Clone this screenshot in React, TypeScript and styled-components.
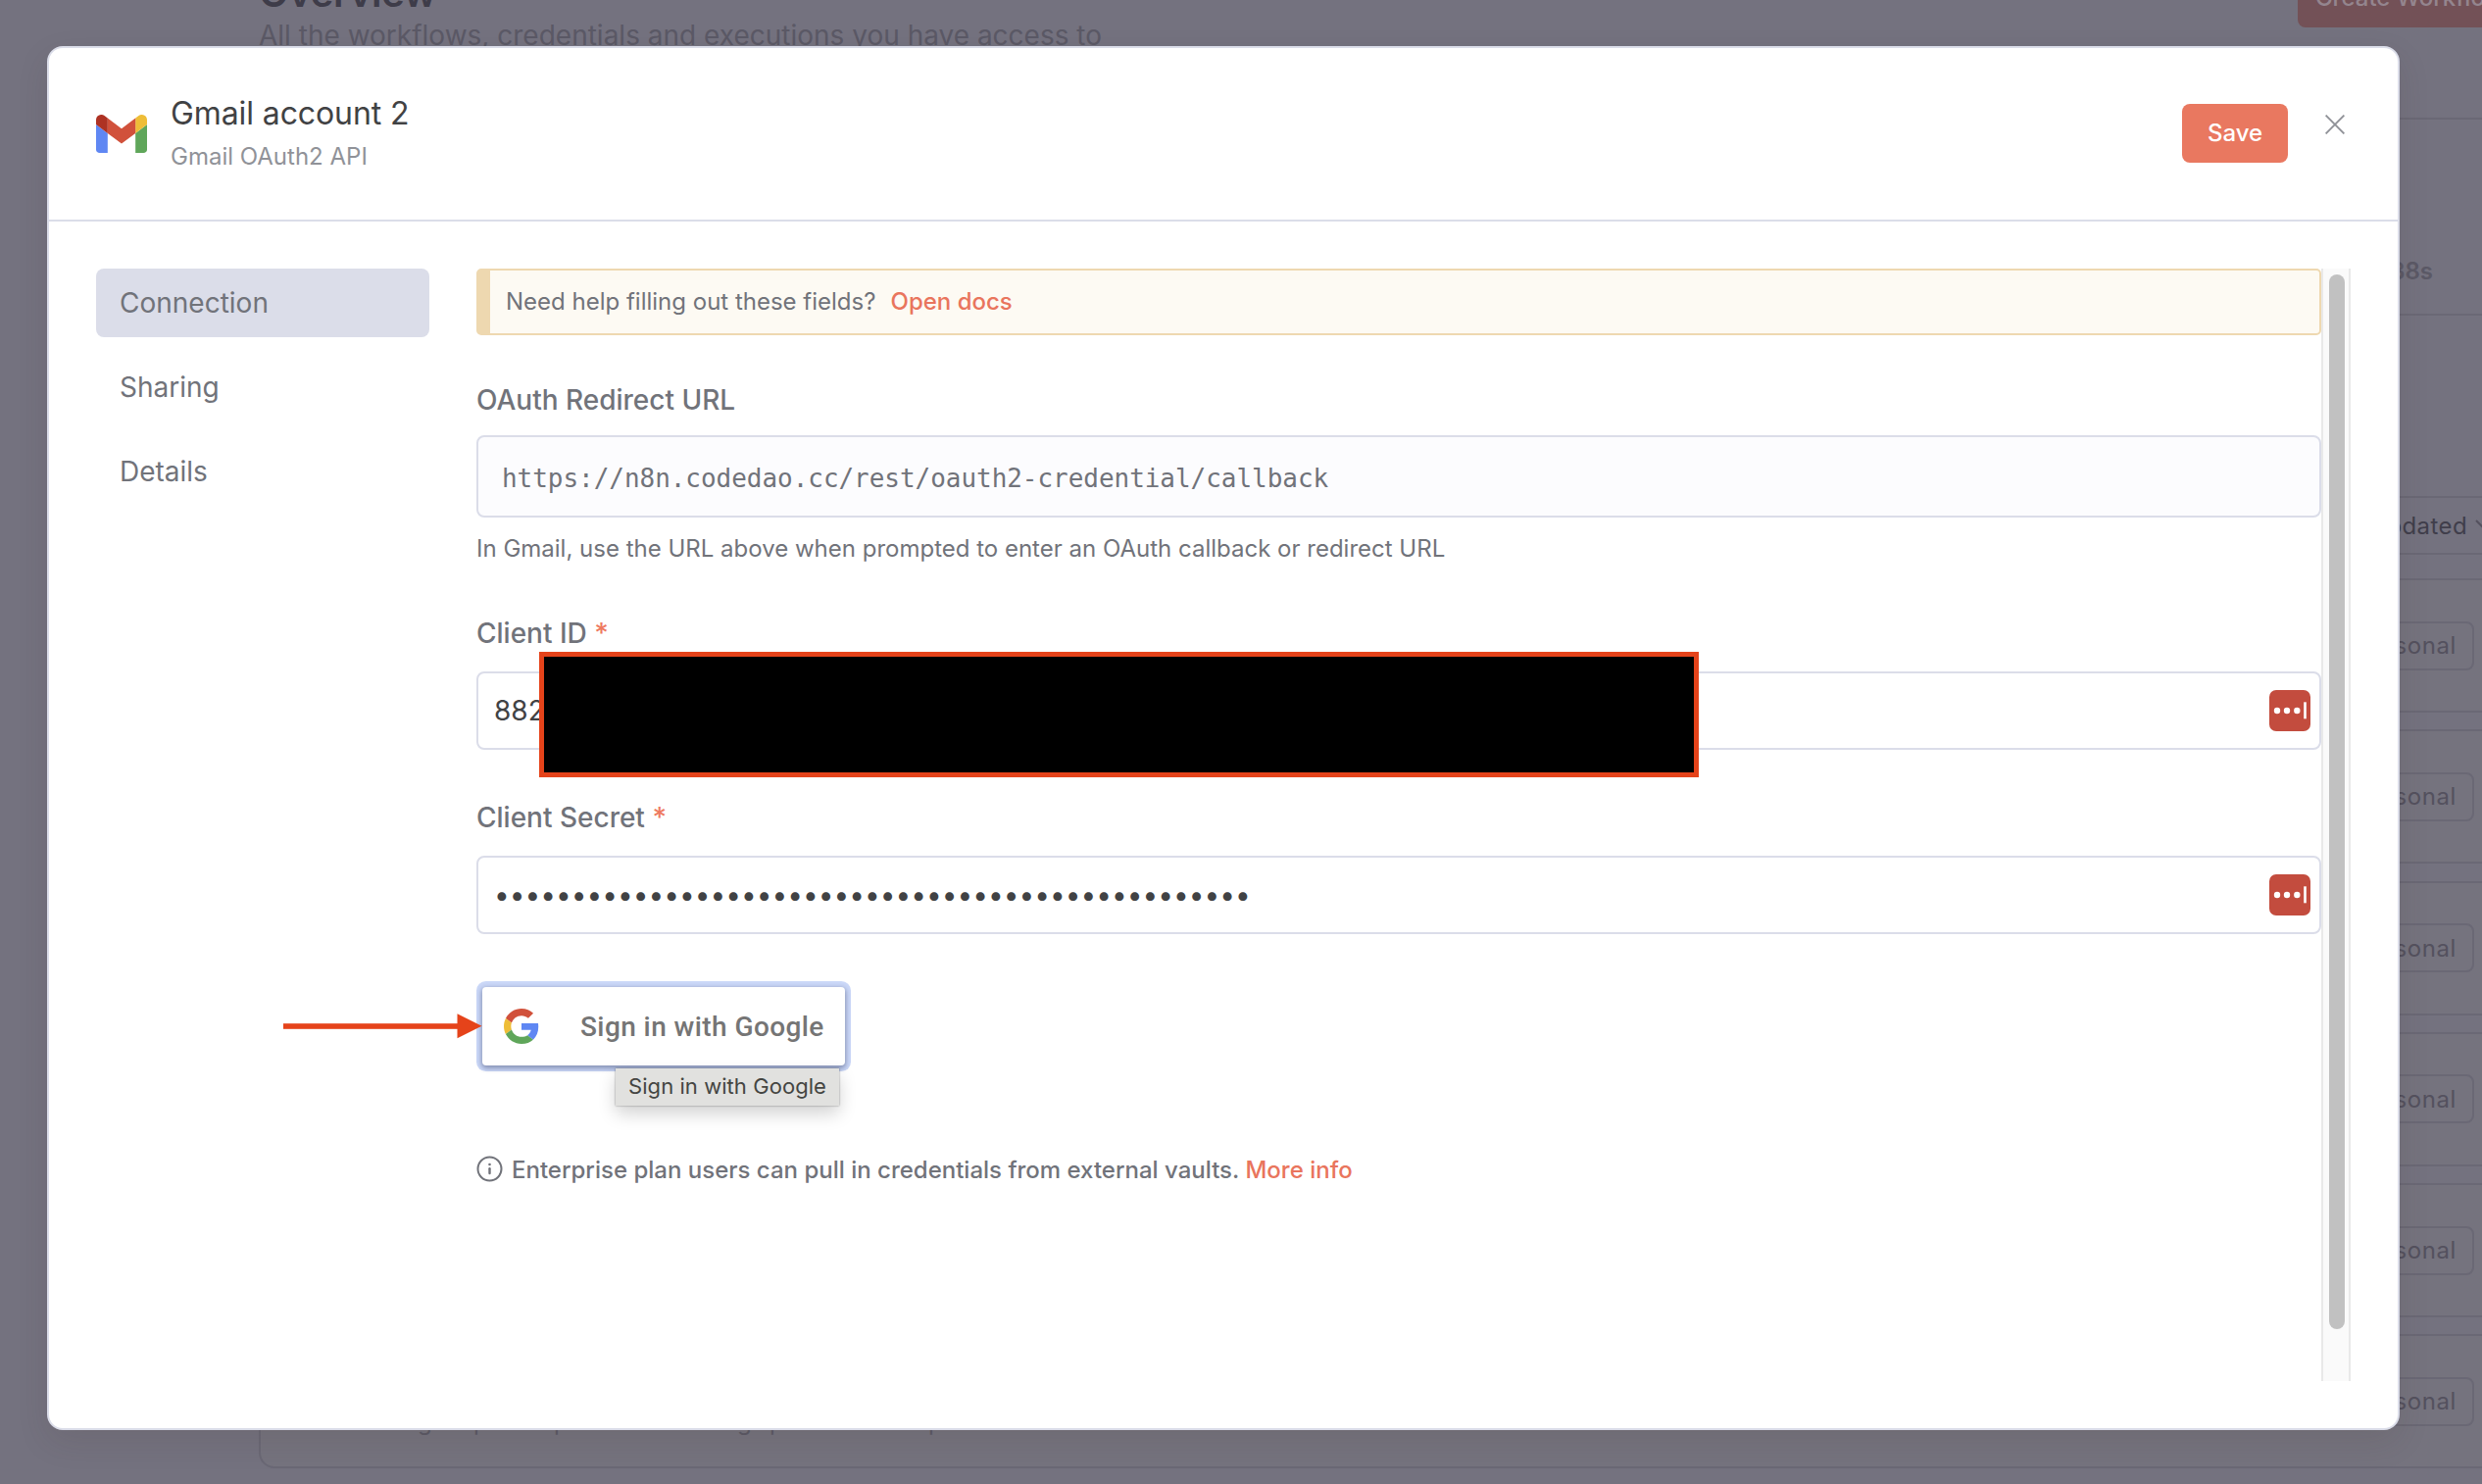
import React from 'react';
import styled, { createGlobalStyle } from 'styled-components';

const GlobalStyle = createGlobalStyle`
  * { box-sizing: border-box; }
  body {
    margin: 0;
    font-family: Inter, "Liberation Sans", sans-serif;
    color: #71737a;
    background: #74727f;
  }
  button { font-family: inherit; cursor: pointer; }
`;

/* ---------- dimmed page behind the dialog ---------- */

const Screen = styled.div`
  position: relative;
  width: 2532px;
  height: 1514px;
  overflow: hidden;
  background: #74727f;
`;

const Backdrop = styled.div`
  display: flex;
  flex-direction: column;
  width: 2600px;
  padding-left: 264px;
`;

const PageHeader = styled.div`
  display: flex;
  justify-content: space-between;
  height: 120px;
`;

const PageTitle = styled.h1`
  margin: -24px 0 0;
  font-size: 40px;
  line-height: 34px;
  font-weight: 600;
  letter-spacing: -0.4px;
  color: #3e3c49;
`;

const PageSubtitle = styled.p`
  margin: 6px 0 0;
  font-size: 28px;
  line-height: 40px;
  color: #5b5966;
  white-space: nowrap;
`;

const CreateButton = styled.div`
  width: 256px;
  height: 60px;
  margin-top: -32px;
  padding-left: 18px;
  border-radius: 8px;
  font-size: 24px;
  line-height: 59px;
  font-weight: 500;
  color: #94858e;
  background: #735157;
`;

const Stats = styled.div`
  display: flex;
  justify-content: flex-end;
  align-items: flex-end;
  height: 202px;
  padding: 0 116px 25px 0;
  border: 2px solid #6a6875;
  border-radius: 12px;
  font-size: 24px;
  line-height: 36px;
  font-weight: 600;
  color: #5b5966;
`;

const Toolbar = styled.div`
  display: flex;
  justify-content: flex-end;
  margin-top: 184px;
`;

const SortSelect = styled.div`
  display: flex;
  align-items: center;
  justify-content: flex-end;
  gap: 8px;
  width: 420px;
  height: 60px;
  padding-right: 53px;
  border: 2px solid #6a6875;
  border-radius: 8px;
  font-size: 24px;
  letter-spacing: 0.4px;
  color: #403e4b;
`;

const WorkflowList = styled.div`
  display: flex;
  flex-direction: column;
  gap: 17.3px;
  margin-top: 24px;
`;

const WorkflowCard = styled.div`
  display: flex;
  align-items: center;
  justify-content: flex-end;
  height: 137px;
  padding-right: 74px;
  border: 2px solid #6a6875;
  border-radius: 16px;
  background: #75737e;
`;

const CardMeta = styled.div`
  display: flex;
  align-self: flex-end;
  width: 700px;
  margin: 0 auto 29px 160px;
  font-size: 24px;
  line-height: 32px;
  color: #5b5966;
`;

const MetaPart = styled.span<{ $width: number }>`
  width: ${({ $width }) => $width}px;
`;

const OwnerBadge = styled.div`
  display: flex;
  align-items: center;
  height: 50px;
  padding: 0 16px;
  border: 2px solid #6a6875;
  border-radius: 8px;
  font-size: 24px;
  letter-spacing: 0.6px;
  color: #54515e;
`;

/* ---------- dialog ---------- */

const Dialog = styled.div`
  position: absolute;
  left: 48px;
  top: 47px;
  display: flex;
  flex-direction: column;
  width: 2400px;
  height: 1412px;
  border: 2px solid #dbdde9;
  border-radius: 16px;
  background: #fff;
  box-shadow: 0 12px 32px rgba(68, 50, 40, 0.12);
`;

const DialogHeader = styled.header`
  display: flex;
  height: 177px;
  padding: 46px 54px 0 48px;
  border-bottom: 2px solid #dbdde9;
`;

const ServiceIcon = styled.div`
  width: 52px;
  height: 39px;
  margin: 22px 24px 0 0;
`;

const Heading = styled.div`
  flex: 1;
  padding-top: 1px;
`;

const CredentialName = styled.div`
  font-size: 32px;
  line-height: 40px;
  letter-spacing: -0.1px;
  color: #414244;
`;

const CredentialType = styled.div`
  margin-top: 8px;
  font-size: 24px;
  line-height: 32px;
  color: #909298;
`;

const SaveButton = styled.button`
  width: 108px;
  height: 60px;
  margin-top: 11px;
  padding: 0 0 1px;
  border: 0;
  border-radius: 8px;
  font-size: 24px;
  font-weight: 500;
  color: #fff;
  background: #e97860;
`;

const CloseButton = styled.button`
  display: flex;
  width: 20px;
  height: 20px;
  margin: 22px 0 0 38px;
  padding: 0;
  border: 0;
  background: none;
`;

const DialogBody = styled.div`
  display: flex;
  flex: 1;
  padding: 48px 48px 48px;
`;

const SideMenu = styled.nav`
  display: flex;
  flex-direction: column;
  gap: 16px;
  width: 340px;
  margin-right: 48px;
`;

const MenuItem = styled.div<{ $active?: boolean }>`
  height: 70px;
  padding-left: 24px;
  border-radius: 8px;
  font-size: 28px;
  line-height: 70px;
  background: ${({ $active }) => ($active ? '#dbdde9' : 'transparent')};
`;

const Form = styled.div`
  position: relative;
  display: flex;
  flex-direction: column;
  width: 1882px;
`;

const Notice = styled.div`
  height: 68px;
  padding-left: 16px;
  border: 2px solid #eed8b0;
  border-left-width: 14px;
  border-radius: 5px;
  font-size: 24px;
  line-height: 64px;
  background: #fdfaf3;
`;

const TextLink = styled.a<{ $gap?: number }>`
  margin-left: ${({ $gap }) => $gap ?? 0}px;
  font-weight: 500;
  color: #e9755d;
`;

const Label = styled.label<{ $top: number }>`
  margin-top: ${({ $top }) => $top}px;
  font-size: 28px;
  line-height: 40px;
  font-weight: 500;
`;

const Required = styled.span`
  color: #ee7a60;
`;

const UrlBox = styled.div`
  display: flex;
  align-items: center;
  height: 84px;
  margin-top: 16px;
  padding: 4px 24px 0;
  border: 2px solid #dbdde9;
  border-radius: 8px;
  font-family: "DejaVu Sans Mono", "Liberation Mono", monospace;
  font-size: 26px;
  letter-spacing: -0.04px;
  background: #fcfcfe;
`;

const Hint = styled.div`
  margin-top: 14px;
  font-size: 24px;
  line-height: 36px;
`;

const InputBox = styled.div`
  display: flex;
  align-items: center;
  justify-content: space-between;
  height: 80px;
  margin-top: 19px;
  padding: 0 9px 0 16px;
  border: 2px solid #dbdde9;
  border-radius: 8px;
  font-size: 28px;
  color: #414244;
`;

const SignInRow = styled.div`
  position: relative;
  margin: 54px 0 0 6px;
`;

const GoogleButton = styled.button`
  display: flex;
  align-items: center;
  width: 370px;
  height: 80px;
  padding: 0 0 0 22px;
  border: 0;
  border-radius: 4px;
  font-family: Roboto, "Liberation Sans", sans-serif;
  font-size: 28px;
  font-weight: 500;
  letter-spacing: 0.42px;
  white-space: nowrap;
  color: #757575;
  background: #fff;
  box-shadow: 0 2px 5px 1px rgba(40, 50, 90, 0.42), 0 0 0 6px #cbd8f8;
`;

const GoogleLabel = styled.span`
  margin-left: 42px;
`;

const Tooltip = styled.div`
  position: absolute;
  left: 136px;
  top: 83px;
  width: 228px;
  height: 38px;
  font-size: 22px;
  line-height: 37px;
  text-align: center;
  letter-spacing: 0.06px;
  color: #444542;
  background: #e1e1df;
  box-shadow: 0 0 2px rgba(0, 0, 0, 0.4), 0 8px 18px rgba(0, 0, 0, 0.18);
`;

const VaultNote = styled.div`
  display: flex;
  align-items: flex-start;
  margin-top: 89px;
  font-size: 24px;
  line-height: 36px;
  font-weight: 500;

  svg { margin-top: 3px; }
`;

const NoteText = styled.span`
  margin-left: 9px;
`;

const ScrollTrack = styled.div`
  width: 30px;
  height: 1135px;
  padding: 6px 4px 0 6px;
  border: solid #e9e9e9;
  border-width: 0 2px;
  background: #fafafa;
`;

const ScrollThumb = styled.div`
  width: 16px;
  height: 1076px;
  border-radius: 8px;
  background: #c1c1c1;
`;

/* ---------- annotations drawn over the dialog ---------- */

const Redaction = styled.div`
  position: absolute;
  left: 550px;
  top: 665px;
  width: 1183px;
  height: 128px;
  border: 5px solid #e5431a;
  background: #000;
`;

const Arrow = styled.svg`
  position: absolute;
  left: 289px;
  top: 1034px;
`;

const GmailLogo = () => (
  <svg width="52" height="39" viewBox="52 42 88 66" preserveAspectRatio="none" display="block">
    <path fill="#5f87f3" d="M58 108h14V74L52 59v43c0 3.32 2.69 6 6 6" />
    <path fill="#5fa65a" d="M120 108h14c3.32 0 6-2.69 6-6V59l-20 15" />
    <path fill="#eebd37" d="M120 48v26l20-15v-8c0-7.42-8.47-11.65-14.4-7.2" />
    <path fill="#d1513b" d="M72 74V48l24 18 24-18v26L96 92" />
    <path fill="#ae3223" d="M52 51v8l20 15V48l-5.6-4.2c-5.94-4.45-14.4-.22-14.4 7.2" />
  </svg>
);

const GoogleLogo = () => (
  <svg width="36" height="36" viewBox="0 0 48 48">
    <path fill="#d1513b" d="M24 9.5c3.54 0 6.71 1.22 9.21 3.6l6.85-6.85C35.9 2.38 30.47 0 24 0 14.62 0 6.51 5.38 2.56 13.22l7.98 6.19C12.43 13.72 17.74 9.5 24 9.5z" />
    <path fill="#5f87f3" d="M46.98 24.55c0-1.57-.15-3.09-.38-4.55H24v9.02h12.94c-.58 2.96-2.26 5.48-4.78 7.18l7.73 6c4.51-4.18 7.09-10.36 7.09-17.65z" />
    <path fill="#eebd37" d="M10.53 28.59c-.48-1.45-.76-2.99-.76-4.59s.27-3.14.76-4.59l-7.98-6.19C.92 16.46 0 20.12 0 24c0 3.88.92 7.54 2.56 10.78l7.97-6.19z" />
    <path fill="#5fa65a" d="M24 48c6.48 0 11.93-2.13 15.89-5.81l-7.73-6c-2.15 1.45-4.92 2.3-8.16 2.3-6.26 0-11.57-4.22-13.47-9.91l-7.98 6.19C6.51 42.62 14.62 48 24 48z" />
  </svg>
);

const PasswordManagerIcon = () => (
  <svg width="42" height="42" viewBox="0 0 42 42">
    <rect width="42" height="42" rx="7" fill="#c34c3e" />
    <circle cx="8" cy="21" r="3.2" fill="#fff" />
    <circle cx="18" cy="21" r="3.2" fill="#fff" />
    <circle cx="28.3" cy="21" r="3.2" fill="#fff" />
    <rect x="35.2" y="12.3" width="2.6" height="17" fill="#fff" />
  </svg>
);

const InfoIcon = () => (
  <svg width="27" height="27" viewBox="0 0 27 27">
    <circle cx="13.5" cy="13.5" r="12" fill="none" stroke="#71737a" strokeWidth="2" />
    <circle cx="13.5" cy="9" r="1.3" fill="#71737a" />
    <path d="M13.5 13.2v4.8" stroke="#71737a" strokeWidth="2.4" strokeLinecap="round" />
  </svg>
);

const owners = ['Personal', 'Personal', 'Personal', 'Personal', 'Personal', 'Personal'];
const metaParts = [
  { text: 'g', width: 57 },
  { text: 'p', width: 82 },
  { text: 'p', width: 187 },
  { text: 'g', width: 33 },
  { text: 'p', width: 162 },
  { text: 'p', width: 30 },
];

export default function App() {
  return (
    <Screen>
      <GlobalStyle />
      <Backdrop>
        <PageHeader>
          <div>
            <PageTitle>Overview</PageTitle>
            <PageSubtitle>All the workflows, credentials and executions you have access to</PageSubtitle>
          </div>
          <CreateButton>Create Workflow</CreateButton>
        </PageHeader>
        <Stats>0.38s</Stats>
        <Toolbar>
          <SortSelect>
            Sort by last updated
            <svg width="20" height="12" viewBox="0 0 20 12" fill="none" stroke="#54515e" strokeWidth="2">
              <path d="M1 1l9 9 9-9" />
            </svg>
          </SortSelect>
        </Toolbar>
        <WorkflowList>
          {owners.map((owner, i) => (
            <WorkflowCard key={i}>
              {i === owners.length - 1 && (
                <CardMeta>
                  {metaParts.map((part, j) => (
                    <MetaPart key={j} $width={part.width}>{part.text}</MetaPart>
                  ))}
                </CardMeta>
              )}
              <OwnerBadge>{owner}</OwnerBadge>
            </WorkflowCard>
          ))}
        </WorkflowList>
      </Backdrop>

      <Dialog>
        <DialogHeader>
          <ServiceIcon><GmailLogo /></ServiceIcon>
          <Heading>
            <CredentialName>Gmail account 2</CredentialName>
            <CredentialType>Gmail OAuth2 API</CredentialType>
          </Heading>
          <SaveButton>Save</SaveButton>
          <CloseButton aria-label="Close">
            <svg width="20" height="20" viewBox="0 0 20 20" stroke="#8f9197" strokeWidth="1.9">
              <path d="M0.6 0.6L19.4 19.4M19.4 0.6L0.6 19.4" />
            </svg>
          </CloseButton>
        </DialogHeader>
        <DialogBody>
          <SideMenu>
            <MenuItem $active>Connection</MenuItem>
            <MenuItem>Sharing</MenuItem>
            <MenuItem>Details</MenuItem>
          </SideMenu>
          <Form>
            <Notice>
              Need help filling out these fields?
              <TextLink $gap={15}>Open docs</TextLink>
            </Notice>
            <Label $top={46}>OAuth Redirect URL</Label>
            <UrlBox>https://n8n.codedao.cc/rest/oauth2-credential/callback</UrlBox>
            <Hint>In Gmail, use the URL above when prompted to enter an OAuth callback or redirect URL</Hint>
            <Label $top={48}>Client ID <Required>*</Required></Label>
            <InputBox>
              <span>882</span>
              <PasswordManagerIcon />
            </InputBox>
            <Label $top={49}>Client Secret <Required>*</Required></Label>
            <InputBox>
              <span>{'•'.repeat(49)}</span>
              <PasswordManagerIcon />
            </InputBox>
            <SignInRow>
              <GoogleButton>
                <GoogleLogo />
                <GoogleLabel>Sign in with Google</GoogleLabel>
              </GoogleButton>
              <Tooltip>Sign in with Google</Tooltip>
            </SignInRow>
            <VaultNote>
              <InfoIcon />
              <NoteText>
                Enterprise plan users can pull in credentials from external vaults.{' '}
                <TextLink>More info</TextLink>
              </NoteText>
            </VaultNote>
          </Form>
          <ScrollTrack><ScrollThumb /></ScrollTrack>
        </DialogBody>
      </Dialog>

      <Redaction />
      <Arrow width="204" height="26" viewBox="0 0 204 26" fill="#e5431a">
        <rect x="0" y="10.2" width="180" height="5.6" />
        <path d="M177.5 0.3L202.5 12.8L177.5 25.3z" />
      </Arrow>
    </Screen>
  );
}
